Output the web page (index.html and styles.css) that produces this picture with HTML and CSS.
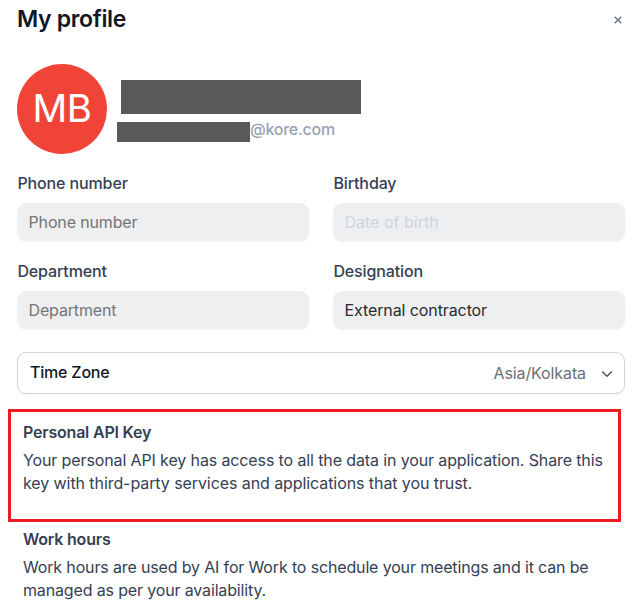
FILE: index.html
```html
<!DOCTYPE html>
<html lang="en">
<head>
<meta charset="utf-8">
<title>My profile</title>
<link rel="stylesheet" href="styles.css">
</head>
<body>
<main class="profile">
  <header class="header">
    <h1 class="title">My profile</h1>
    <svg class="close" viewBox="0 0 8 8" aria-label="Close"><path d="M.7.7l6.6 6.6M7.3.7L.7 7.3"/></svg>
  </header>
  <section class="identity">
    <div class="avatar">MB</div>
    <div class="who">
      <div class="name-mask"></div>
      <div class="email"><span class="email-mask"></span><span class="domain">@kore.com</span></div>
    </div>
  </section>
  <section class="fields">
    <div class="field"><span class="label">Phone number</span><div class="input muted">Phone number</div></div>
    <div class="field"><span class="label">Birthday</span><div class="input faint">Date of birth</div></div>
    <div class="field"><span class="label">Department</span><div class="input muted">Department</div></div>
    <div class="field"><span class="label">Designation</span><div class="input">External contractor</div></div>
  </section>
  <div class="timezone">
    <span class="tz-label">Time Zone</span>
    <span class="tz-value">Asia/Kolkata</span>
    <svg class="chevron" viewBox="0 0 12 8"><path d="M1.2 1.5L6 6.2l4.8-4.7"/></svg>
  </div>
  <section class="block highlighted">
    <h2 class="heading">Personal API Key</h2>
    <p class="text"><span class="tight">Your personal API key has access to all the data in your application. Share this</span><br>key with third-party services and applications that you trust.</p>
  </section>
  <section class="block">
    <h2 class="heading">Work hours</h2>
    <p class="text"><span class="tighter">Work hours are used by AI for Work to schedule your meetings and it can be</span><br><span class="tighter">managed as per your availability.</span></p>
  </section>
</main>
</body>
</html>
```
FILE: styles.css
```css
* { box-sizing: border-box; }
body { margin: 0; background: #fff; font-family: Inter, sans-serif; font-size: 16px; color: #344054; }
h1, h2, p { margin: 0; }
.profile { width: 632px; height: 604px; overflow: hidden; padding: 4px 7px 0 8px; }
.header { display: flex; justify-content: space-between; align-items: center; height: 30px; padding: 0 3px 0 9px; }
.title { font-size: 23px; line-height: 30px; font-weight: 600; letter-spacing: -.34px; color: #101828; white-space: nowrap; }
.close { width: 8px; height: 8px; margin-top: 2px; fill: none; stroke: #667085; stroke-width: 1.3; }
.identity { display: flex; margin: 30px 0 0 9px; }
.avatar { width: 90px; height: 90px; border-radius: 50%; background: #f04438; color: #fff; font-size: 38.5px; letter-spacing: -.5px; line-height: 89px; text-align: center; }
.who { padding: 16px 0 0 10px; }
.name-mask { width: 240px; height: 34px; margin-left: 4px; background: #595959; }
.email { display: flex; margin-top: 8px; height: 20px; }
.email-mask { width: 133px; background: #595959; }
.domain { font-weight: 500; line-height: 15px; letter-spacing: -.25px; color: #98a2b3; }
.fields { display: grid; grid-template-columns: 292px 292px; column-gap: 24px; row-gap: 18px; margin: 18px 0 0 9px; letter-spacing: -.1px; }
.field { display: flex; flex-direction: column; height: 70px; }
.label { padding-left: .4px; font-weight: 500; line-height: 23px; margin-bottom: 8px; letter-spacing: -.12px; }
.input { height: 38px; padding: 0 11.5px; border-radius: 9px; background: #eeeff1; box-shadow: 0 1px 2px rgba(16, 24, 40, .05); color: #2b2b2b; line-height: 39px; }
.muted { color: #757575; letter-spacing: -.15px; }
.faint { color: #d0d5dd; letter-spacing: 0; }
.timezone { display: flex; align-items: center; height: 42px; width: 608px; margin: 22px 0 0 9px; padding: 0 11px 0 12px; border: 1px solid #d0d5dd; border-radius: 9px; box-shadow: 0 1px 2px rgba(16, 24, 40, .05); }
.tz-label { flex: 1; font-weight: 500; color: #101828; line-height: 22px; margin-bottom: 2px; letter-spacing: -.2px; }
.tz-value { color: #6b6f76; letter-spacing: -.1px; }
.chevron { width: 12px; height: 8px; margin-left: 15px; margin-top: 2px; fill: none; stroke: #475467; stroke-width: 1.4; }
.block { padding: 8px 0 0 15px; }
.heading { font-size: 16px; font-weight: 600; line-height: 18px; margin-bottom: 8px; letter-spacing: -.2px; }
.text { line-height: 23px; white-space: nowrap; letter-spacing: -.08px; }
.tight { letter-spacing: -.12px; }
.tighter { letter-spacing: -.15px; }
.highlighted { width: 613px; height: 113px; margin-top: 15px; padding: 11px 0 0 12px; border: 3px solid #ed1c24; }
```
